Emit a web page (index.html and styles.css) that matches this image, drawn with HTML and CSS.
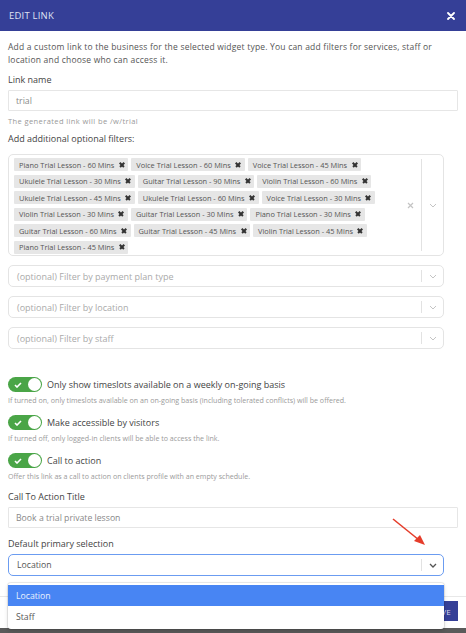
FILE: index.html
```html
<!DOCTYPE html>
<html>
<head>
<meta charset="utf-8">
<link rel="stylesheet" href="styles.css">
</head>
<body>
<div class="modal">
  <div class="header">
    <span class="title">EDIT LINK</span>
    <svg class="close" width="8" height="8" viewBox="0 0 8 8"><path d="M1 1L7 7M7 1L1 7" stroke="#fff" stroke-width="1.8" stroke-linecap="round"/></svg>
  </div>
  <div class="content">
    <p class="desc">Add a custom link to the business for the selected widget type. You can add filters for services, staff or location and choose who can access it.</p>

    <div class="label l-link">Link name</div>
    <div class="input">trial</div>
    <div class="help">The generated link will be /w/trial</div>

    <div class="label l-filters">Add additional optional filters:</div>
    <div class="multi">
      <div class="tags">
        <span class="tag">Piano Trial Lesson - 60 Mins<i class="x"></i></span>
        <span class="tag">Voice Trial Lesson - 60 Mins<i class="x"></i></span>
        <span class="tag">Voice Trial Lesson - 45 Mins<i class="x"></i></span>
        <span class="tag">Ukulele Trial Lesson - 30 Mins<i class="x"></i></span>
        <span class="tag">Guitar Trial Lesson - 90 Mins<i class="x"></i></span>
        <span class="tag">Violin Trial Lesson - 60 Mins<i class="x"></i></span>
        <span class="tag">Ukulele Trial Lesson - 45 Mins<i class="x"></i></span>
        <span class="tag">Ukulele Trial Lesson - 60 Mins<i class="x"></i></span>
        <span class="tag">Voice Trial Lesson - 30 Mins<i class="x"></i></span>
        <span class="tag">Violin Trial Lesson - 30 Mins<i class="x"></i></span>
        <span class="tag">Guitar Trial Lesson - 30 Mins<i class="x"></i></span>
        <span class="tag">Piano Trial Lesson - 30 Mins<i class="x"></i></span>
        <span class="tag">Guitar Trial Lesson - 60 Mins<i class="x"></i></span>
        <span class="tag">Guitar Trial Lesson - 45 Mins<i class="x"></i></span>
        <span class="tag">Violin Trial Lesson - 45 Mins<i class="x"></i></span>
        <span class="tag">Piano Trial Lesson - 45 Mins<i class="x"></i></span>
      </div>
      <div class="clear"><svg width="7" height="7" viewBox="0 0 7 7"><path d="M1 1L6 6M6 1L1 6" stroke="#c4c4c4" stroke-width="1.2"/></svg></div>
      <div class="indicators"><span class="sep"></span><svg class="chev" width="8" height="5" viewBox="0 0 8 5"><path d="M1 1L4 4L7 1" fill="none" stroke="#c4c4c4" stroke-width="1"/></svg></div>
    </div>

    <div class="select">
      <span class="ph">(optional) Filter by payment plan type</span>
      <div class="indicators"><span class="sep"></span><svg class="chev" width="8" height="5" viewBox="0 0 8 5"><path d="M1 1L4 4L7 1" fill="none" stroke="#c4c4c4" stroke-width="1"/></svg></div>
    </div>
    <div class="select">
      <span class="ph">(optional) Filter by location</span>
      <div class="indicators"><span class="sep"></span><svg class="chev" width="8" height="5" viewBox="0 0 8 5"><path d="M1 1L4 4L7 1" fill="none" stroke="#c4c4c4" stroke-width="1"/></svg></div>
    </div>
    <div class="select">
      <span class="ph">(optional) Filter by staff</span>
      <div class="indicators"><span class="sep"></span><svg class="chev" width="8" height="5" viewBox="0 0 8 5"><path d="M1 1L4 4L7 1" fill="none" stroke="#c4c4c4" stroke-width="1"/></svg></div>
    </div>

    <div class="toggle-row t-first">
      <span class="switch"><svg class="check" width="8" height="6" viewBox="0 0 8 6"><path d="M1 3L3 5L7 1" fill="none" stroke="#fff" stroke-width="1.6"/></svg><span class="knob"></span></span>
      <span class="toggle-label">Only show timeslots available on a weekly on-going basis</span>
    </div>
    <div class="toggle-help">If turned on, only timeslots available on an on-going basis (including tolerated conflicts) will be offered.</div>

    <div class="toggle-row">
      <span class="switch"><svg class="check" width="8" height="6" viewBox="0 0 8 6"><path d="M1 3L3 5L7 1" fill="none" stroke="#fff" stroke-width="1.6"/></svg><span class="knob"></span></span>
      <span class="toggle-label">Make accessible by visitors</span>
    </div>
    <div class="toggle-help">If turned off, only logged-in clients will be able to access the link.</div>

    <div class="toggle-row">
      <span class="switch"><svg class="check" width="8" height="6" viewBox="0 0 8 6"><path d="M1 3L3 5L7 1" fill="none" stroke="#fff" stroke-width="1.6"/></svg><span class="knob"></span></span>
      <span class="toggle-label">Call to action</span>
    </div>
    <div class="toggle-help">Offer this link as a call to action on clients profile with an empty schedule.</div>

    <div class="label l-cta">Call To Action Title</div>
    <div class="input">Book a trial private lesson</div>

    <div class="label l-default">Default primary selection</div>
    <div class="select-wrap">
      <div class="select focused">
        <span class="value">Location</span>
        <div class="indicators"><span class="sep"></span><svg class="chev" width="8" height="5" viewBox="0 0 8 5"><path d="M1 1L4 4L7 1" fill="none" stroke="#555" stroke-width="1.3"/></svg></div>
      </div>
      <div class="menu">
        <div class="option active">Location</div>
        <div class="option">Staff</div>
      </div>
    </div>
  </div>
  <div class="footer">
    <button class="save">SAVE</button>
  </div>
</div>
<svg class="arrow" width="466" height="633" viewBox="0 0 466 633">
  <line x1="393" y1="519" x2="419" y2="540" stroke="#e53d2b" stroke-width="1.6"/>
  <path d="M425 545L414 541L420 535Z" fill="#e53d2b"/>
</svg>
</body>
</html>
```

FILE: styles.css
```css
* { box-sizing: border-box; }
html, body { margin: 0; padding: 0; }
body {
  width: 466px;
  height: 633px;
  background: #5a5a5a;
  font-family: "Open Sans", "DejaVu Sans", sans-serif;
  color: #4a4a4a;
  position: relative;
  overflow: hidden;
}
.modal {
  background: #fff;
  height: 628px;
  position: relative;
}
.header {
  height: 31px;
  background: #353f97;
  display: flex;
  align-items: center;
  justify-content: space-between;
  padding: 0 11px 0 9px;
}
.title {
  color: #dfe2f3;
  font-size: 9.5px;
  letter-spacing: 0.2px;
}
.close { display: block; }
.content { padding: 0 8px; }
.desc {
  margin: 9px 0 0;
  font-size: 8.5px;
  letter-spacing: 0.2px;
  line-height: 13px;
  color: #555;
}
.label {
  font-size: 9px;
  line-height: 12px;
  color: #444;
}
.l-link { margin-top: 8px; }
.l-filters { margin-top: 7px; }
.l-cta { margin-top: 10px; }
.l-default { margin-top: 10px; }
.input {
  margin-top: 4px;
  height: 21px;
  border: 1px solid #e6e6e6;
  border-radius: 1px;
  display: flex;
  align-items: center;
  padding-left: 7px;
  font-size: 8.7px;
  color: #888;
}
.help {
  font-size: 7.5px;
  letter-spacing: 0.4px;
  line-height: 10px;
  color: #999;
  margin-top: 5px;
}
.multi {
  margin-top: 9px;
  width: 436px;
  height: 102px;
  border: 1px solid #e4e4e4;
  border-radius: 5px;
  display: flex;
  align-items: stretch;
}
.tags {
  flex: 1;
  display: flex;
  flex-wrap: wrap;
  align-content: flex-start;
  gap: 3.5px 3px;
  padding: 3px 0 0 5px;
}
.tag {
  height: 13px;
  background: #e6e6e6;
  border-radius: 1px;
  display: inline-flex;
  align-items: center;
  padding: 0 4px 0 5px;
  font-size: 7.4px;
  color: #555;
  white-space: nowrap;
}
.tag .x {
  width: 5px;
  height: 5px;
  margin-left: 5px;
  position: relative;
}
.tag .x::before, .tag .x::after {
  content: "";
  position: absolute;
  left: -0.5px;
  top: 1.8px;
  width: 6px;
  height: 1.5px;
  background: #333;
  transform: rotate(45deg);
}
.tag .x::after { transform: rotate(-45deg); }
.clear {
  width: 22px;
  display: flex;
  align-items: center;
  justify-content: center;
}
.clear svg { display: block; }
.indicators {
  display: flex;
  align-items: center;
  width: 22px;
  padding: 4px 0;
  align-self: stretch;
}
.sep {
  width: 1px;
  align-self: stretch;
  background: #e2e2e2;
}
.chev { display: block; margin-left: 7px; }
.select {
  margin-top: 9px;
  width: 436px;
  height: 22px;
  border: 1px solid #e4e4e4;
  border-radius: 5px;
  display: flex;
  align-items: center;
  padding-left: 8px;
}
.select .ph, .select .value {
  flex: 1;
  font-size: 9px;
  color: #aaa;
}
.select .value { color: #555; font-size: 8.7px; }
.toggle-row {
  display: flex;
  align-items: center;
  margin-top: 22px;
  height: 15px;
}
.toggle-row.t-first { margin-top: 28px; }
.toggle-row + .toggle-help + .toggle-row { margin-top: 10px; }
.switch {
  width: 34px;
  height: 15px;
  border-radius: 8px;
  background: #4aa547;
  position: relative;
  display: inline-flex;
  align-items: center;
}
.check { position: absolute; left: 6px; top: 5px; }
.knob {
  position: absolute;
  right: 1px;
  top: 1px;
  width: 13px;
  height: 13px;
  border-radius: 50%;
  background: #fff;
}
.toggle-label {
  margin-left: 5px;
  font-size: 9px;
  color: #444;
}
.toggle-help {
  margin-top: 3px;
  font-size: 7.1px;
  line-height: 10px;
  color: #9a9a9a;
}
.select-wrap { position: relative; margin-top: 4px; }
.select.focused {
  margin-top: 0;
  border-color: #6b9cf1;
  border-width: 1.2px;
}
.menu {
  position: absolute;
  left: 0;
  top: 29px;
  width: 436px;
  background: #fff;
  border-radius: 3px;
  box-shadow: 0 0 0 1px rgba(0,0,0,0.08), 0 2px 4px rgba(0,0,0,0.15);
  padding: 2px 0;
  z-index: 5;
}
.option {
  height: 21px;
  display: flex;
  align-items: center;
  padding-left: 8px;
  font-size: 8.7px;
  color: #555;
}
.option.active { background: #4885f3; color: #eaf1fe; }
.footer {
  position: absolute;
  left: 0;
  right: 0;
  top: 596px;
  border-top: 1px solid #e8e8e8;
  display: flex;
  justify-content: flex-end;
  padding: 4px 8px 0 0;
}
.save {
  height: 20px;
  border: 0;
  background: #353f97;
  color: #d8dbef;
  font-family: inherit;
  font-size: 8px;
  padding: 0 7px;
  letter-spacing: 0.3px;
}
.arrow { position: absolute; left: 0; top: 0; pointer-events: none; }
```
